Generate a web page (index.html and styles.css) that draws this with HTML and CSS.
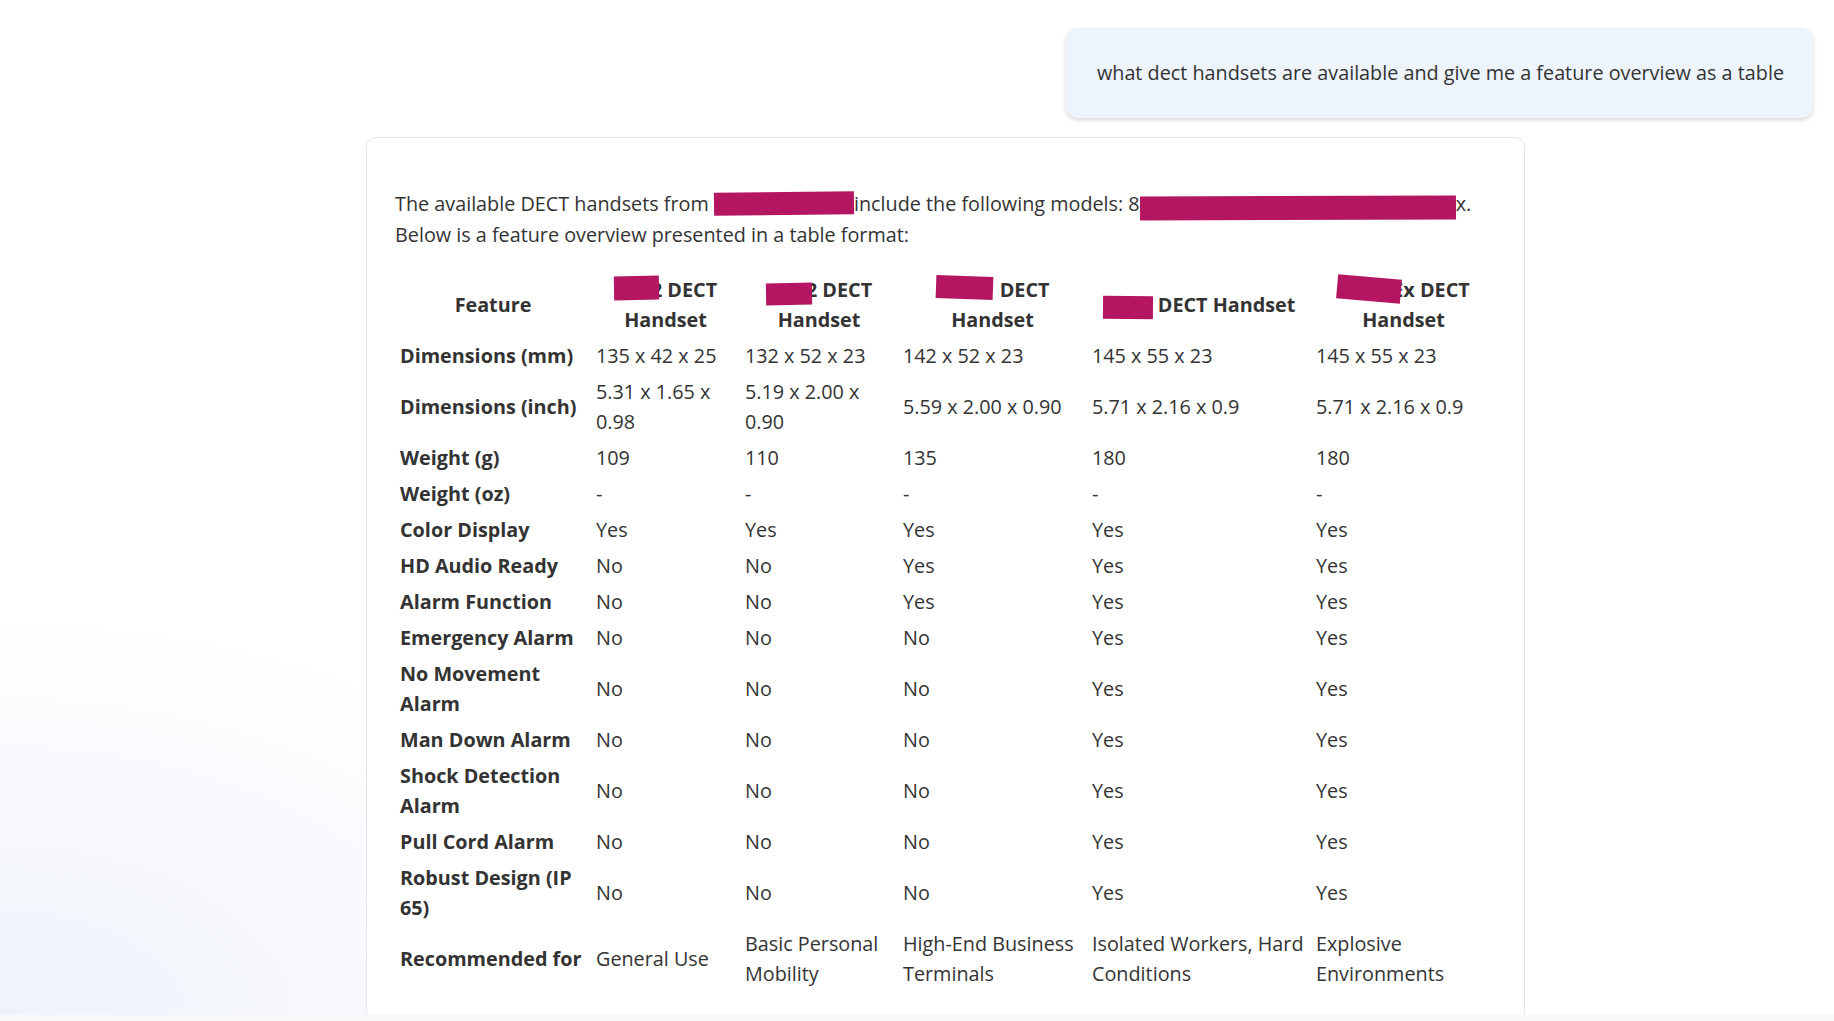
FILE: index.html
```html
<!DOCTYPE html>
<html lang="en">
<head>
<meta charset="utf-8">
<title>Chat</title>
<link rel="stylesheet" href="styles.css">
</head>
<body>
<div class="page">
  <div class="chat">
    <div class="user-row">
      <div class="bubble">what dect handsets are available and give me a feature overview as a table</div>
    </div>
    <div class="card">
      <p class="intro">The available DECT handsets from <span class="redact rp1"></span>include the following models: 8<span class="redact rp2"></span>x.<br>Below is a feature overview presented in a table format:</p>
      <table class="features">
        <colgroup>
          <col class="c0"><col class="c1"><col class="c2"><col class="c3"><col class="c4"><col class="c5">
        </colgroup>
        <thead>
          <tr>
            <th>Feature</th>
            <th><span class="redact rh1"></span>2 DECT Handset</th>
            <th><span class="redact rh2"></span>2 DECT Handset</th>
            <th><span class="redact rh3"></span> DECT Handset</th>
            <th><span class="redact rh4"></span> DECT Handset</th>
            <th><span class="redact rh5"></span>Ex DECT Handset</th>
          </tr>
        </thead>
        <tbody>
          <tr><th>Dimensions (mm)</th><td>135 x 42 x 25</td><td>132 x 52 x 23</td><td>142 x 52 x 23</td><td>145 x 55 x 23</td><td>145 x 55 x 23</td></tr>
          <tr><th>Dimensions (inch)</th><td>5.31 x 1.65 x 0.98</td><td>5.19 x 2.00 x 0.90</td><td>5.59 x 2.00 x 0.90</td><td>5.71 x 2.16 x 0.9</td><td>5.71 x 2.16 x 0.9</td></tr>
          <tr><th>Weight (g)</th><td>109</td><td>110</td><td>135</td><td>180</td><td>180</td></tr>
          <tr><th>Weight (oz)</th><td>-</td><td>-</td><td>-</td><td>-</td><td>-</td></tr>
          <tr><th>Color Display</th><td>Yes</td><td>Yes</td><td>Yes</td><td>Yes</td><td>Yes</td></tr>
          <tr><th>HD Audio Ready</th><td>No</td><td>No</td><td>Yes</td><td>Yes</td><td>Yes</td></tr>
          <tr><th>Alarm Function</th><td>No</td><td>No</td><td>Yes</td><td>Yes</td><td>Yes</td></tr>
          <tr><th>Emergency Alarm</th><td>No</td><td>No</td><td>No</td><td>Yes</td><td>Yes</td></tr>
          <tr><th>No Movement Alarm</th><td>No</td><td>No</td><td>No</td><td>Yes</td><td>Yes</td></tr>
          <tr><th>Man Down Alarm</th><td>No</td><td>No</td><td>No</td><td>Yes</td><td>Yes</td></tr>
          <tr><th>Shock Detection Alarm</th><td>No</td><td>No</td><td>No</td><td>Yes</td><td>Yes</td></tr>
          <tr><th>Pull Cord Alarm</th><td>No</td><td>No</td><td>No</td><td>Yes</td><td>Yes</td></tr>
          <tr><th>Robust Design (IP 65)</th><td>No</td><td>No</td><td>No</td><td>Yes</td><td>Yes</td></tr>
          <tr><th>Recommended for</th><td>General Use</td><td>Basic Personal Mobility</td><td>High-End Business Terminals</td><td>Isolated Workers, Hard Conditions</td><td>Explosive Environments</td></tr>
        </tbody>
      </table>
    </div>
  </div>
  <div class="bottom-strip"></div>
</div>
</body>
</html>
```

FILE: styles.css
```css
* { box-sizing: border-box; }

html, body {
  margin: 0;
  padding: 0;
}

body {
  font-family: "Open Sans", "Noto Sans", "Liberation Sans", sans-serif;
  color: #333333;
  background: #ffffff;
}

.page {
  width: 1834px;
  height: 1021px;
  overflow: hidden;
  display: flex;
  flex-direction: column;
  background:
    radial-gradient(ellipse 700px 420px at 0% 100%, rgba(232, 238, 248, 0.75), rgba(255, 255, 255, 0) 100%),
    #ffffff;
}

.chat {
  height: 1015px;
  overflow: hidden;
  padding-top: 28px;
  display: flex;
  flex-direction: column;
}

.user-row {
  display: flex;
  justify-content: flex-end;
  padding-right: 21px;
}

.bubble {
  background: #eef4fc;
  border-radius: 12px;
  padding: 30px 29px 30px 31px;
  font-size: 19.8px;
  line-height: 30px;
  color: #333333;
  box-shadow: 0 2px 4px rgba(0, 0, 0, 0.16);
}

.card {
  margin-top: 19px;
  margin-left: 366px;
  width: 1159px;
  flex-shrink: 0;
  background: #ffffff;
  border: 1px solid #e6e7ea;
  border-radius: 10px;
  padding: 51px 28px 28px 28px;
}

.intro {
  margin: 0 0 22px 0;
  font-size: 19.8px;
  line-height: 30.5px;
}

.redact {
  display: inline-block;
  background: #b51662;
  vertical-align: middle;
}

.rp1 { width: 140px; height: 23px; transform: translateY(-2px) rotate(-0.6deg); }
.rp2 { width: 316px; height: 24px; transform: translateY(2px) rotate(-0.2deg); }

.rh1 { width: 45px; height: 24px; margin-right: -8px; transform: translateY(-4px) rotate(-1deg); }
.rh2 { width: 46px; height: 22px; margin-right: -6px; transform: translateY(2px) rotate(-1deg); }
.rh3 { width: 57px; height: 23px; margin-right: 2px; transform: translateY(-4px) rotate(2deg); }
.rh4 { width: 50px; height: 23px; margin-right: 0; transform: translateY(1px) rotate(0.5deg); }
.rh5 { width: 64px; height: 24px; margin-right: -9px; transform: translateY(-3px) rotate(5deg); }

.features {
  width: 100%;
  border-collapse: collapse;
  table-layout: fixed;
  font-size: 19.8px;
  line-height: 30px;
}

.c0 { width: 196px; }
.c1 { width: 149px; }
.c2 { width: 158px; }
.c3 { width: 189px; }
.c4 { width: 224px; }
.c5 { width: 185px; }

.features th,
.features td {
  padding: 3px 5px;
  vertical-align: middle;
}

.features thead th {
  text-align: center;
  font-weight: 700;
}

.features tbody th {
  text-align: left;
  font-weight: 700;
}

.features td {
  text-align: left;
  font-weight: 400;
}

.bottom-strip {
  height: 6px;
  background: #f7f8fa;
}
```
